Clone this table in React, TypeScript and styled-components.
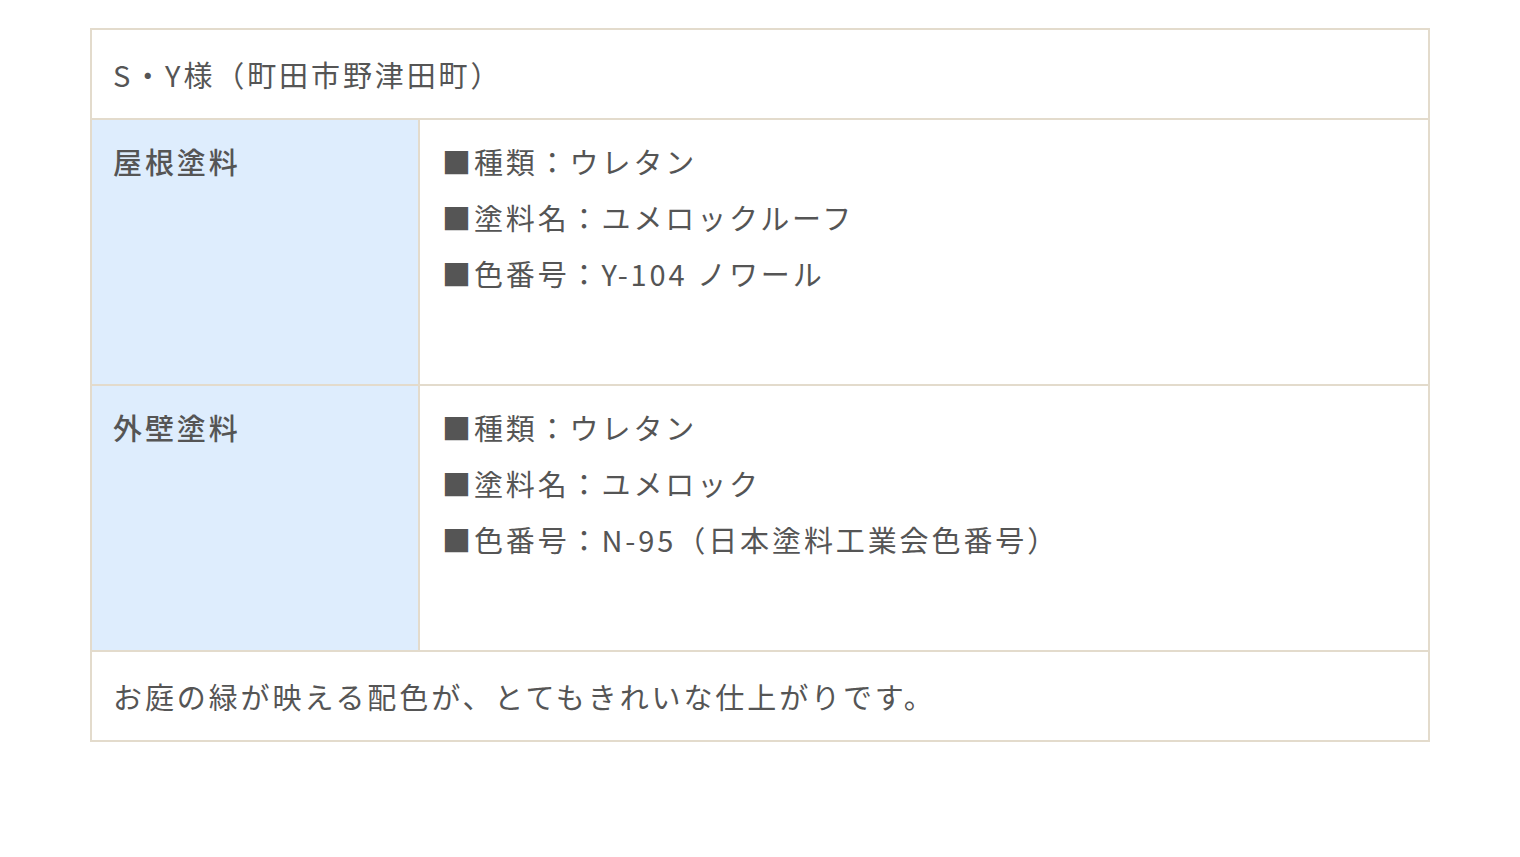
import React from 'react';
import styled, { createGlobalStyle } from 'styled-components';

const GlobalStyle = createGlobalStyle`
  body {
    margin: 0;
    background: #fff;
    font-family: "Noto Sans CJK JP", "Noto Sans", sans-serif;
    color: #555;
  }
`;

const Page = styled.div`
  padding: 28px 90px;
`;

const Table = styled.table`
  width: 100%;
  border-collapse: collapse;
  font-size: 29px;
  line-height: 56px;
  letter-spacing: 2.9px;
`;

const Cell = styled.td`
  border: 2px solid #e3dbcc;
  padding: 16px 21px;
  vertical-align: top;
`;

const Label = styled(Cell)`
  width: 284px;
  background: #deedfd;
  font-weight: 500;
  padding-top: 13px;
  height: 235px;
`;

const Detail = styled(Cell)`
  padding: 13px 22px;
`;

const Line = styled.div`
  white-space: nowrap;
`;

type Paint = { label: string; lines: string[] };

const paints: Paint[] = [
  {
    label: '屋根塗料',
    lines: ['■種類：ウレタン', '■塗料名：ユメロックルーフ', '■色番号：Y-104 ノワール'],
  },
  {
    label: '外壁塗料',
    lines: ['■種類：ウレタン', '■塗料名：ユメロック', '■色番号：N-95（日本塗料工業会色番号）'],
  },
];

export default function App() {
  return (
    <Page>
      <GlobalStyle />
      <Table>
        <tbody>
          <tr>
            <Cell colSpan={2}>S・Y様（町田市野津田町）</Cell>
          </tr>
          {paints.map(p => (
            <tr key={p.label}>
              <Label>{p.label}</Label>
              <Detail>
                {p.lines.map(l => (
                  <Line key={l}>{l}</Line>
                ))}
              </Detail>
            </tr>
          ))}
          <tr>
            <Cell colSpan={2}>お庭の緑が映える配色が、とてもきれいな仕上がりです。</Cell>
          </tr>
        </tbody>
      </Table>
    </Page>
  );
}
